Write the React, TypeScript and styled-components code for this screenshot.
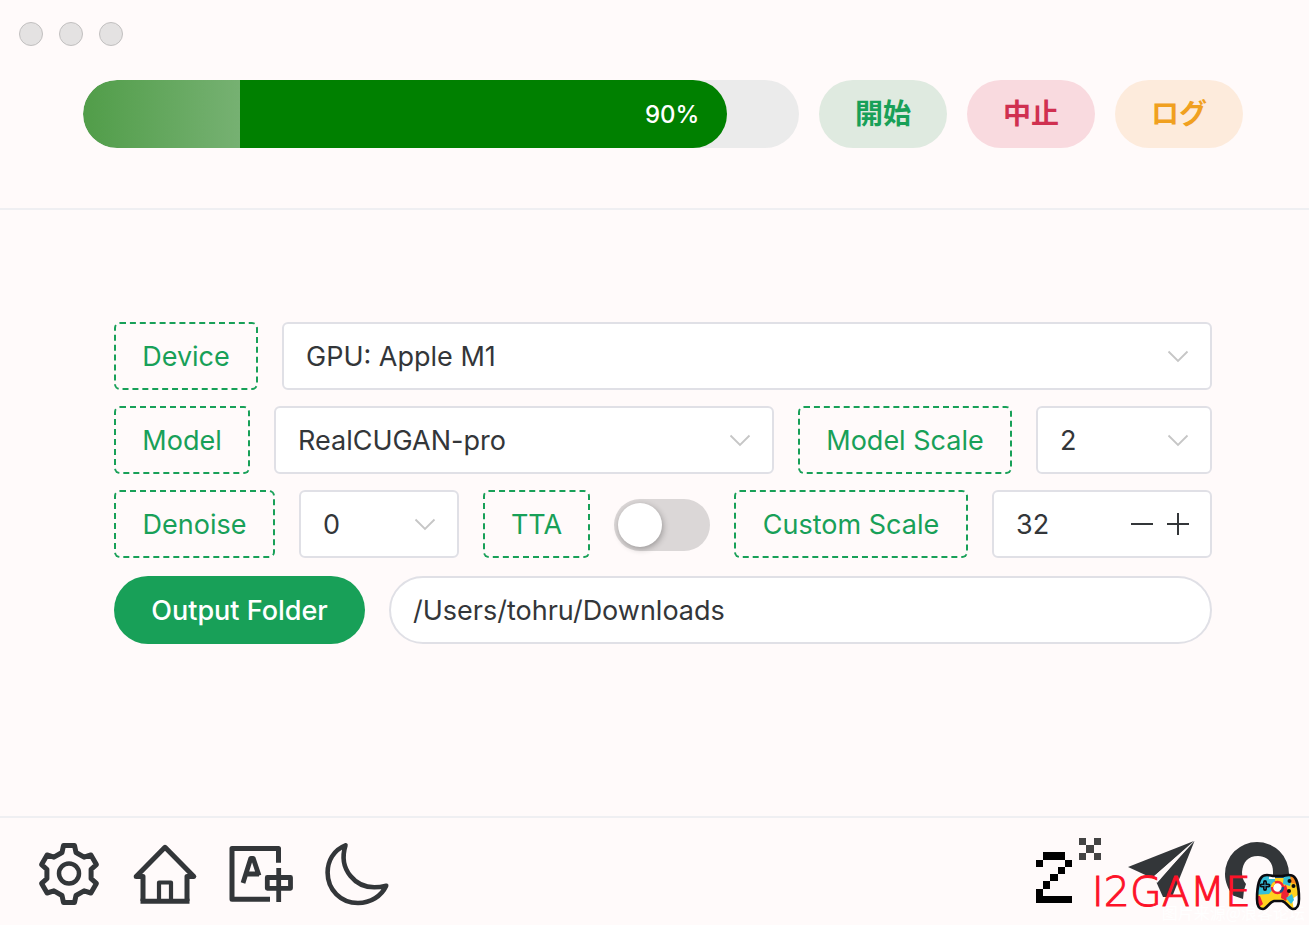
import React, { useState } from "react";
import styled, { createGlobalStyle } from "styled-components";

const GlobalStyle = createGlobalStyle`
  *, *::before, *::after { box-sizing: border-box; }
  body {
    margin: 0;
    background: #fffafa;
    color: #333639;
    font-family: Inter, "Noto Sans CJK JP", sans-serif;
    font-size: 27px;
    line-height: 40px;
  }
  button, input, select { font: inherit; color: inherit; margin: 0; }
  button { cursor: pointer; }
`;

const Window = styled.div`
  display: flex;
  flex-direction: column;
  min-height: 100vh;
`;

const Header = styled.header`
  padding: 22px 66px 60px 83px;
  border-bottom: 2px solid #efeff2;
`;

const WindowControls = styled.div`
  display: flex;
  gap: 16px;
  margin: 0 0 34px -64px;
`;

const WindowDot = styled.button`
  width: 24px;
  height: 24px;
  padding: 0;
  border: 1px solid #c2c0c0;
  border-radius: 50%;
  background: #e4e2e2;
`;

const ActionBar = styled.div`
  display: flex;
  gap: 20px;
`;

const ProgressTrack = styled.div`
  flex: 1;
  height: 68px;
  border-radius: 34px;
  background: #ebebeb;
  overflow: hidden;
`;

const ProgressFill = styled.div`
  display: flex;
  align-items: center;
  justify-content: flex-end;
  height: 100%;
  padding: 2px 28px 0 0;
  border-radius: 34px;
  overflow: hidden;
  color: #fff;
  font-size: 24px;
  font-weight: 500;
  background: linear-gradient(90deg, #519d49, #76b172) 0 0 / 157px 100% no-repeat, #008000;
`;

const PillButton = styled.button<{ $color: string; $bg: string }>`
  width: 128px;
  height: 68px;
  padding: 0;
  border: 0;
  border-radius: 34px;
  background: ${(p) => p.$bg};
  color: ${(p) => p.$color};
  font-size: 28px;
  font-weight: 600;
`;

const Main = styled.main`
  flex: 1;
  padding: 112px 97px 112px 114px;
`;

const Form = styled.form`
  display: flex;
  flex-direction: column;
  gap: 16px;
`;

const Row = styled.div`
  display: flex;
  align-items: center;
  gap: 24px;
`;

const OutputRow = styled(Row)`
  margin-top: 2px;
`;

const Tag = styled.label<{ $width: number }>`
  display: flex;
  align-items: center;
  justify-content: center;
  flex: none;
  width: ${(p) => p.$width}px;
  height: 68px;
  padding-top: 2px;
  border: 2px dashed #18a058;
  border-radius: 6px;
  color: #18a058;
  white-space: nowrap;
`;

const Field = styled.div<{ $width?: number }>`
  position: relative;
  display: flex;
  align-items: center;
  flex: ${(p) => (p.$width ? `0 0 ${p.$width}px` : "1")};
  min-width: 0;
  height: 68px;
  border: 2px solid #e0e0e6;
  border-radius: 6px;
  background: #fff;
`;

const Select = styled.select`
  appearance: none;
  width: 100%;
  height: 100%;
  padding: 2px 60px 0 22px;
  border: 0;
  background: transparent;
  outline: none;
`;

const Chevron = styled.svg`
  position: absolute;
  right: 20px;
  width: 24px;
  height: 24px;
  pointer-events: none;
`;

const NumberInput = styled.input`
  flex: 1;
  min-width: 0;
  height: 100%;
  padding: 0 0 0 22px;
  border: 0;
  background: transparent;
  outline: none;
`;

const Steppers = styled.div`
  display: flex;
  padding-right: 14px;
`;

const StepButton = styled.button`
  display: grid;
  place-items: center;
  width: 36px;
  height: 36px;
  padding: 0;
  border: 0;
  background: transparent;
`;

const Switch = styled.input`
  appearance: none;
  flex: none;
  width: 96px;
  height: 52px;
  margin: 2px 0 0;
  padding: 4px;
  border-radius: 26px;
  background: #dbd7d7;
  cursor: pointer;

  &::before {
    content: "";
    display: block;
    width: 44px;
    height: 44px;
    border-radius: 50%;
    background: #fff;
    box-shadow: 1px 2px 6px rgba(0, 0, 0, 0.3);
  }
  &:checked { background: #18a058; }
  &:checked::before { margin-left: auto; }
`;

const FolderButton = styled.button`
  flex: none;
  width: 251px;
  height: 68px;
  padding: 2px 0 0;
  border: 0;
  border-radius: 34px;
  background: #18a058;
  color: #fff;
  font-weight: 500;
`;

const PathInput = styled.input`
  flex: 1;
  min-width: 0;
  height: 68px;
  padding: 0 22px;
  border: 2px solid #e0e0e6;
  border-radius: 34px;
  background: #fff;
  outline: none;
`;

const Footer = styled.footer`
  position: relative;
  display: flex;
  justify-content: space-between;
  padding: 24px 21px 17px 36px;
  border-top: 2px solid #efeff2;
`;

const IconGroup = styled.div<{ $gap: number }>`
  display: flex;
  gap: ${(p) => p.$gap}px;
`;

const IconButton = styled.button`
  width: 66px;
  height: 66px;
  padding: 0;
  border: 0;
  background: transparent;
`;

const IconLink = styled.a`
  width: 66px;
  height: 66px;
  color: inherit;
`;

const Icon = styled.svg`
  display: block;
  width: 66px;
  height: 66px;
  overflow: visible;
`;

const SiteBadge = styled.div`
  position: absolute;
  right: 8px;
  bottom: 14px;
  display: flex;
  align-items: center;
  gap: 4px;
  color: #fd1228;
  font-family: "DejaVu Sans Light", "DejaVu Sans", sans-serif;
  font-size: 41px;
  font-weight: 200;
  line-height: 30px;
  -webkit-text-stroke: 1px #fd1228;
  pointer-events: none;
`;

const SourceNote = styled.div`
  position: absolute;
  right: 4px;
  bottom: 3px;
  color: #fff;
  font-family: "Noto Sans CJK SC", sans-serif;
  font-size: 16px;
  line-height: 20px;
  pointer-events: none;
`;

const ArrowDown = () => (
  <Chevron viewBox="0 0 24 24" fill="none" stroke="#c6c6c6" strokeWidth="1.8" aria-hidden="true">
    <path d="M2.500 7.500 12 17l9.500-9.500" />
  </Chevron>
);

const polar = (r: number, deg: number) => {
  const a = (deg * Math.PI) / 180;
  return `${(33 + r * Math.sin(a)).toFixed(1)},${(32 - r * Math.cos(a)).toFixed(1)}`;
};

const gearPoints = [0, 60, 120, 180, 240, 300]
  .flatMap((a) => [polar(22.6, a - 18), polar(29, a - 11), polar(29, a + 11), polar(22.6, a + 18)])
  .join(" ");

const GearIcon = () => (
  <Icon viewBox="0 0 66 66" fill="none" stroke="#333639" strokeWidth="5" strokeLinejoin="round">
    <polygon points={gearPoints} />
    <circle cx="33" cy="31.5" r="10" strokeWidth="4.5" />
  </Icon>
);

const HomeIcon = () => (
  <Icon viewBox="0 0 66 66" fill="none" stroke="#333639" strokeWidth="5">
    <path d="M11 59V34.500H4.200L33 5.300 61.800 34.500H55V59" strokeLinejoin="round" />
    <path d="M8.500 59.300H57.500" />
    <path d="M27 59V40.500H39V59" strokeLinejoin="round" strokeWidth="4.2" />
  </Icon>
);

const LanguageIcon = () => (
  <Icon viewBox="0 0 66 66" fill="none" stroke="#333639" strokeWidth="5" strokeLinejoin="round">
    <path d="M50.500 20.700V6.500H4V57.300H42" />
    <path d="M15 41 22.800 16.300H25.200L31 33.600M18 32H31" strokeWidth="4.8" />
    <path d="M39.300 35.500H62.500V46.300H39.300ZM50.700 26V60" strokeWidth="4.8" />
  </Icon>
);

const MoonIcon = () => (
  <Icon viewBox="0 0 66 66" fill="none" stroke="#333639" strokeWidth="4.6" strokeLinejoin="round">
    <path d="M21.500 3.300C9.500 8 3.600 19 3.600 30.500 3.600 48 17 61 34 61 46.500 61 57.500 54 62.200 43.700 47 47.500 34.500 44 26.500 34 18.500 24.500 18.200 14 21.500 3.300Z" />
  </Icon>
);

const twoPixels = [
  [1, 0, 3], [0, 1, 1], [4, 1, 1], [3, 2, 1], [2, 3, 1], [1, 4, 1], [0, 5, 1], [0, 6, 5],
];
const crossPixels = [[0, 0], [2, 0], [1, 1], [0, 2], [2, 2]];

const ScaleLogo = () => (
  <Icon viewBox="0 0 66 66" shapeRendering="crispEdges">
    {twoPixels.map(([x, y, n]) => (
      <rect key={`${x}-${y}`} x={2 + x * 7.2} y={10.3 + y * 7.25} width={n * 7.2} height="7.25" fill="#000" />
    ))}
    {crossPixels.map(([x, y]) => (
      <rect key={`${x}-${y}`} x={45 + x * 7.3} y={-4 + y * 7.3} width="7.3" height="7.3" fill="#444" />
    ))}
  </Icon>
);

const PlaneIcon = () => (
  <Icon viewBox="0 0 66 66" fill="#333639">
    <path d="M0 25 66-1 24 36Z" />
    <path d="M66.500-1 44 55H35L28.500 40.500Z" />
    <path d="M24 36 62 3 29 41Z" fill="#fffafa" />
  </Icon>
);

const HubIcon = () => (
  <Icon viewBox="0 0 66 66" fill="#333639">
    <path d="M21 57 11 53.500C6 47 3 40 3 32A32 32 0 0 1 67 32V46H51V30C51 20 45 14 36 14 26 14 21 20 20 30 20 35 21 38 24 42L22 48Z" />
  </Icon>
);

const padOutline =
  "M9 2.500C13 1 16 3 19 3H27C30 3 33 1 37 2.500 42 4 44 15 44 26 44 33 42 36 38 36 34 36 32 29 27 28H19C14 29 12 36 8 36 4 36 2 33 2 26 2 15 4 4 9 2.500Z";

const PadIcon = () => (
  <svg width="46" height="38" viewBox="0 0 46 38" aria-hidden="true">
    <defs>
      <clipPath id="pad">
        <path d={padOutline} />
      </clipPath>
    </defs>
    <g clipPath="url(#pad)">
      <path d="M0 0H46V38H0Z" fill="#ffd21e" />
      <path d="M0 0H20V14L14 21 0 22Z" fill="#35bfd8" />
      <path d="M0 23H5L8 31 4 34H0Z" fill="#ef2334" />
      <path d="M14 0H20V6H14Z" fill="#fff" />
      <path d="M20 0H29V5H20Z" fill="#1e5288" />
      <path d="M29 0H38L35 13 28 11Z" fill="#35bfd8" />
      <path d="M35 0H46V12L36 10Z" fill="#ff8a18" />
      <path d="M27 14 31 12 34 21 31 28 26 25Z" fill="#ef2334" />
      <path d="M37 26 46 20V38H39Z" fill="#fff" />
      <path d="M31 25 37 21 39 27 36 31Z" fill="#35bfd8" />
    </g>
    <path d={padOutline} fill="none" stroke="#0b0b10" strokeWidth="2.6" />
    <circle cx="22.5" cy="14.5" r="5.5" fill="#fff" stroke="#ef2334" strokeWidth="2.4" />
    <path d="M17 14A5.500 5.500 0 0 1 20 9.600" fill="none" stroke="#ffd21e" strokeWidth="2.4" />
    <path d="M25 19A5.500 5.500 0 0 0 28 14" fill="none" stroke="#1e5288" strokeWidth="2.4" />
    <path d="M10 9V16M6.500 12.500H13.500" stroke="#0b0b10" strokeWidth="4" strokeLinecap="round" />
    <path d="M10 9V16M6.500 12.500H13.500" stroke="#2d8fb0" strokeWidth="1" />
    <circle cx="34.5" cy="8" r="2" fill="#0b0b10" />
    <circle cx="38.5" cy="13" r="2" fill="#0b0b10" />
    <circle cx="34" cy="18" r="2" fill="#0b0b10" />
  </svg>
);

export default function App() {
  const [progress] = useState(90);
  const [scale, setScale] = useState(32);
  const [tta, setTta] = useState(false);

  return (
    <Window>
      <GlobalStyle />
      <Header>
        <WindowControls>
          <WindowDot aria-label="Close" />
          <WindowDot aria-label="Minimize" />
          <WindowDot aria-label="Zoom" />
        </WindowControls>
        <ActionBar>
          <ProgressTrack role="progressbar" aria-valuenow={progress} aria-valuemin={0} aria-valuemax={100}>
            <ProgressFill style={{ width: `${progress}%` }}>{progress}%</ProgressFill>
          </ProgressTrack>
          <PillButton $color="#18a058" $bg="#dfeae0">開始</PillButton>
          <PillButton $color="#d03050" $bg="#f9dadf">中止</PillButton>
          <PillButton $color="#f0a020" $bg="#fdebdc">ログ</PillButton>
        </ActionBar>
      </Header>

      <Main>
        <Form onSubmit={(e) => e.preventDefault()}>
          <Row>
            <Tag $width={144} htmlFor="device">Device</Tag>
            <Field>
              <Select id="device"><option>GPU: Apple M1</option></Select>
              <ArrowDown />
            </Field>
          </Row>
          <Row>
            <Tag $width={136} htmlFor="model">Model</Tag>
            <Field>
              <Select id="model"><option>RealCUGAN-pro</option></Select>
              <ArrowDown />
            </Field>
            <Tag $width={214} htmlFor="model-scale">Model Scale</Tag>
            <Field $width={176}>
              <Select id="model-scale"><option>2</option></Select>
              <ArrowDown />
            </Field>
          </Row>
          <Row>
            <Tag $width={161} htmlFor="denoise">Denoise</Tag>
            <Field>
              <Select id="denoise"><option>0</option></Select>
              <ArrowDown />
            </Field>
            <Tag $width={107} htmlFor="tta">TTA</Tag>
            <Switch id="tta" type="checkbox" role="switch" checked={tta} onChange={() => setTta(!tta)} />
            <Tag $width={234} htmlFor="custom-scale">Custom Scale</Tag>
            <Field $width={220}>
              <NumberInput
                id="custom-scale"
                inputMode="numeric"
                value={scale}
                onChange={(e) => setScale(Number(e.target.value) || 0)}
              />
              <Steppers>
                <StepButton type="button" aria-label="Decrease" onClick={() => setScale(scale - 1)}>
                  <svg width="24" height="24" stroke="#333639" strokeWidth="2"><path d="M1 12H23" /></svg>
                </StepButton>
                <StepButton type="button" aria-label="Increase" onClick={() => setScale(scale + 1)}>
                  <svg width="24" height="24" stroke="#333639" strokeWidth="2"><path d="M1 12H23M12 1V23" /></svg>
                </StepButton>
              </Steppers>
            </Field>
          </Row>
          <OutputRow>
            <FolderButton type="button">Output Folder</FolderButton>
            <PathInput aria-label="Output Folder" defaultValue="/Users/tohru/Downloads" />
          </OutputRow>
        </Form>
      </Main>

      <Footer>
        <IconGroup $gap={30}>
          <IconButton aria-label="Settings"><GearIcon /></IconButton>
          <IconButton aria-label="Home"><HomeIcon /></IconButton>
          <IconButton aria-label="Language"><LanguageIcon /></IconButton>
          <IconButton aria-label="Dark mode"><MoonIcon /></IconButton>
        </IconGroup>
        <IconGroup $gap={28}>
          <IconLink href="#scale" aria-label="Final2x"><ScaleLogo /></IconLink>
          <IconLink href="#share" aria-label="Share"><PlaneIcon /></IconLink>
          <IconLink href="#source" aria-label="Source code"><HubIcon /></IconLink>
        </IconGroup>
        <SourceNote>图片来源@浪客论坛</SourceNote>
        <SiteBadge>
          <span>I2GAME</span>
          <PadIcon />
        </SiteBadge>
      </Footer>
    </Window>
  );
}
